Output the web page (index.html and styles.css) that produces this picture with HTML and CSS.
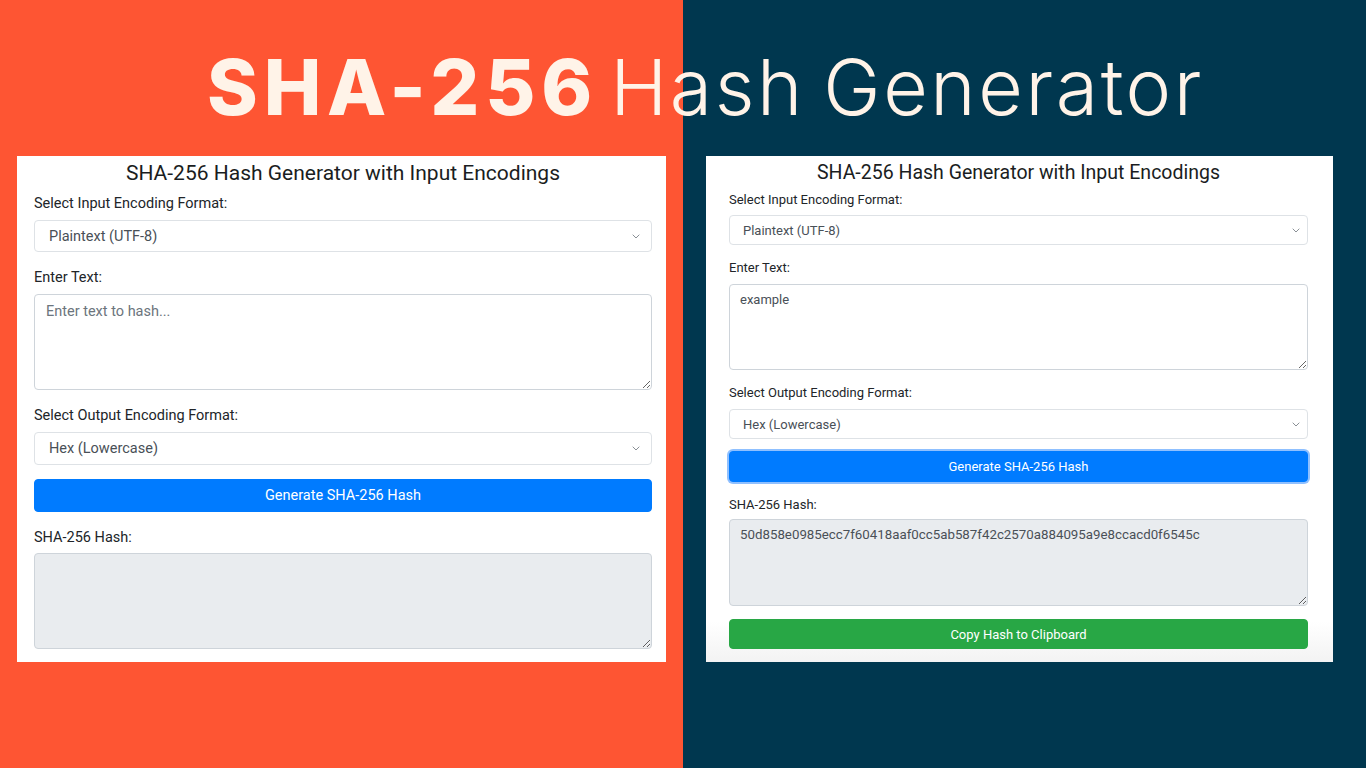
FILE: index.html
```html
<!DOCTYPE html>
<html lang="en">
<head>
<meta charset="utf-8">
<title>SHA-256 Hash Generator</title>
<link rel="stylesheet" href="styles.css">
</head>
<body>
<div class="page">
  <header class="hero">
    <h1 class="hero-title"><span class="bold">SHA-256</span> <span class="light">Hash Generator</span></h1>
  </header>
  <main class="cards">
    <section class="card card-a">
      <h2 class="card-title">SHA-256 Hash Generator with Input Encodings</h2>
      <label class="lbl lbl-first">Select Input Encoding Format:</label>
      <div class="select"><span>Plaintext (UTF-8)</span><svg class="chev" width="8" height="5" viewBox="0 0 8 5"><path d="M0.7 0.7l3.3 3.3 3.3-3.3" fill="none" stroke="#8a9096" stroke-width="1"/></svg></div>
      <label class="lbl">Enter Text:</label>
      <textarea class="ta" placeholder="Enter text to hash..."></textarea>
      <label class="lbl">Select Output Encoding Format:</label>
      <div class="select sel-2"><span>Hex (Lowercase)</span><svg class="chev" width="8" height="5" viewBox="0 0 8 5"><path d="M0.7 0.7l3.3 3.3 3.3-3.3" fill="none" stroke="#8a9096" stroke-width="1"/></svg></div>
      <button class="btn btn-blue">Generate SHA-256 Hash</button>
      <label class="lbl lbl-hash">SHA-256 Hash:</label>
      <textarea class="ta ta-out" readonly></textarea>
    </section>
    <section class="card card-b">
      <h2 class="card-title">SHA-256 Hash Generator with Input Encodings</h2>
      <label class="lbl lbl-first">Select Input Encoding Format:</label>
      <div class="select"><span>Plaintext (UTF-8)</span><svg class="chev" width="8" height="5" viewBox="0 0 8 5"><path d="M0.7 0.7l3.3 3.3 3.3-3.3" fill="none" stroke="#8a9096" stroke-width="1"/></svg></div>
      <label class="lbl">Enter Text:</label>
      <textarea class="ta">example</textarea>
      <label class="lbl">Select Output Encoding Format:</label>
      <div class="select"><span>Hex (Lowercase)</span><svg class="chev" width="8" height="5" viewBox="0 0 8 5"><path d="M0.7 0.7l3.3 3.3 3.3-3.3" fill="none" stroke="#8a9096" stroke-width="1"/></svg></div>
      <button class="btn btn-blue btn-focus">Generate SHA-256 Hash</button>
      <label class="lbl lbl-hash">SHA-256 Hash:</label>
      <textarea class="ta ta-out" readonly>50d858e0985ecc7f60418aaf0cc5ab587f42c2570a884095a9e8ccacd0f6545c</textarea>
      <button class="btn btn-green">Copy Hash to Clipboard</button>
    </section>
  </main>
</div>
</body>
</html>
```
FILE: styles.css
```css
* { box-sizing: border-box; }
html, body { margin: 0; padding: 0; }
body {
  width: 1366px;
  height: 768px;
  overflow: hidden;
  background: linear-gradient(to right, #fe5533 0, #fe5533 683px, #00374f 683px, #00374f 100%);
  font-family: Roboto, "Liberation Sans", sans-serif;
  color: #212529;
}
.page { display: flex; flex-direction: column; height: 768px; }
.hero { height: 156px; padding-top: 49px; }
.hero-title {
  margin: 0;
  padding-left: 207px;
  font-family: Inter, "Noto Sans", sans-serif;
  font-size: 77px;
  line-height: 77px;
  color: #fff3e8;
  white-space: nowrap;
  word-spacing: -6px;
}
.hero-title .bold { font-weight: 800; letter-spacing: 5.8px; }
.hero-title .light { font-weight: 300; letter-spacing: 2.6px; }

.cards { display: flex; align-items: flex-start; padding-left: 17px; gap: 40px; }
.card {
  background: #fff;
  display: flex;
  flex-direction: column;
  height: 506px;
}
.card-title { margin: 0; font-weight: 400; text-align: center; color: #1a1d21; }
.lbl { display: block; }
.select {
  display: flex;
  align-items: center;
  justify-content: space-between;
  background: #fff;
  border: 1px solid #dee2e6;
  border-radius: 4px;
  color: #495057;
}
.chev { flex: none; }
.ta {
  display: block;
  width: 100%;
  border: 1px solid #ced4da;
  border-radius: 4px;
  font-family: inherit;
  color: #495057;
  resize: vertical;
  background: #fff;
}
.ta::placeholder { color: #6c757d; }
.ta-out { background: #e9ecef; }
.btn {
  display: block;
  width: 100%;
  border: 1px solid transparent;
  border-radius: 4px;
  color: #fff;
  font-family: inherit;
  padding: 0;
}
.btn-blue { background: #007bff; border-color: #007bff; }
.btn-green { background: #28a745; border-color: #28a745; }
.btn-focus { box-shadow: 0 0 0 2px rgba(96, 165, 255, 0.7); }

/* left card */
.card-a { width: 649px; padding: 4px 14px 0 17px; font-size: 14.5px; }
.card-a .card-title { font-size: 21px; line-height: 26px; }
.card-a .lbl { line-height: 20px; margin-top: 16px; margin-bottom: 6px; }
.card-a .lbl-first { margin-top: 8px; margin-bottom: 6px; }
.card-a .lbl-hash { margin-bottom: 5px; }
.card-a .select { height: 32px; padding: 0 11px 0 14px; }
.card-a .sel-2 { height: 33px; }
.card-a .ta { height: 96px; padding: 8px 11px; font-size: 14.5px; }
.card-a .select + .btn { margin-top: 14px; }
.card-a .btn { height: 33px; font-size: 14.5px; }

/* right card */
.card-b {
  width: 627px;
  padding: 4px 25px 0 23px;
  font-size: 13px;
  background: linear-gradient(to bottom, #fff 0, #fff 92%, #f3f3f3 100%);
}
.card-b .card-title { font-size: 19.5px; line-height: 26px; }
.card-b .lbl { line-height: 18px; margin-top: 14px; margin-bottom: 7px; }
.card-b .lbl-first { margin-top: 5px; margin-bottom: 6px; }
.card-b .lbl-hash { margin-top: 14px; margin-bottom: 5px; }
.card-b .select { height: 30px; padding: 0 7px 0 13px; }
.card-b .ta { height: 86px; padding: 7px 10px; font-size: 13px; }
.card-b .ta-out { height: 87px; font-size: 13.3px; }
.card-b .select + .btn { margin-top: 12px; height: 31px; }
.card-b .btn { height: 30px; font-size: 13px; }
.card-b .ta-out + .btn { margin-top: 13px; }
```
